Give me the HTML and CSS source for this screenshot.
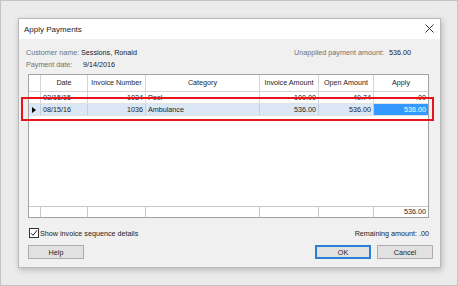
FILE: index.html
```html
<!DOCTYPE html>
<html lang="en">
<head>
    <meta charset="UTF-8">
    <title>Apply Payments</title>
    <link rel="stylesheet" href="styles.css">
</head>
<body>
    <div class="screen">
        <div class="dialog">
            <div class="title-bar">
                <span class="title">Apply Payments</span>
                <svg class="close" width="9" height="9" viewBox="0 0 9 9">
                    <path d="M0.5 0.5 L8.5 8.5 M8.5 0.5 L0.5 8.5" stroke="#333" stroke-width="1" fill="none"/>
                </svg>
            </div>

            <div class="info">
                <div class="info-row">
                    <span class="label">Customer name:</span>
                    <span class="value customer">Sessions, Ronald</span>
                    <span class="label unapplied">Unapplied payment amount:</span>
                    <span class="value amount">536.00</span>
                </div>
                <div class="info-row">
                    <span class="label">Payment date:</span>
                    <span class="value date">9/14/2016</span>
                </div>
            </div>

            <div class="grid">
                <div class="row head">
                    <div class="cell c-sel"></div>
                    <div class="cell c-date">Date</div>
                    <div class="cell c-num">Invoice Number</div>
                    <div class="cell c-cat">Category</div>
                    <div class="cell c-amt">Invoice Amount</div>
                    <div class="cell c-open">Open Amount</div>
                    <div class="cell c-apply">Apply</div>
                </div>
                <div class="row line">
                    <div class="cell c-sel"></div>
                    <div class="cell c-date">03/15/15</div>
                    <div class="cell c-num">1034</div>
                    <div class="cell c-cat">Pool</div>
                    <div class="cell c-amt">100.00</div>
                    <div class="cell c-open">40.74</div>
                    <div class="cell c-apply">.00</div>
                </div>
                <div class="row line selected">
                    <div class="cell c-sel"><span class="pointer"></span></div>
                    <div class="cell c-date">08/15/16</div>
                    <div class="cell c-num">1036</div>
                    <div class="cell c-cat">Ambulance</div>
                    <div class="cell c-amt">536.00</div>
                    <div class="cell c-open">536.00</div>
                    <div class="cell c-apply active">536.00</div>
                </div>
                <div class="grid-space"></div>
                <div class="row totals">
                    <div class="cell c-sel"></div>
                    <div class="cell c-date"></div>
                    <div class="cell c-num"></div>
                    <div class="cell c-cat"></div>
                    <div class="cell c-amt"></div>
                    <div class="cell c-open"></div>
                    <div class="cell c-apply">536.00</div>
                </div>
            </div>

            <div class="options">
                <label class="check">
                    <span class="box">
                        <svg width="8" height="8" viewBox="0 0 8 8">
                            <path d="M1 4.2 L3 6.3 L7 1.3" stroke="#222" stroke-width="1" fill="none"/>
                        </svg>
                    </span>
                    Show invoice sequence details
                </label>
                <span class="remaining">Remaining amount: .00</span>
            </div>

            <div class="buttons">
                <button class="btn">Help</button>
                <div class="btn-group">
                    <button class="btn default">OK</button>
                    <button class="btn">Cancel</button>
                </div>
            </div>

            <div class="highlight"></div>
        </div>
    </div>
</body>
</html>
```

FILE: styles.css
```css
body {
    margin: 0;
    font-family: 'Liberation Sans', Arial, sans-serif;
    font-size: 7.2px;
    color: #222222;
}

.screen {
    width: 458px;
    height: 286px;
    box-sizing: border-box;
    border: 1px solid #c4c4c4;
    background-color: #ebebeb;
    padding: 17px 0 0 17px;
}

.dialog {
    position: relative;
    width: 421px;
    height: 248px;
    background-color: #f0f0f0;
    border: 1px solid #b9b9b9;
    box-shadow: 1px 2px 6px rgba(0, 0, 0, 0.22);
    display: flex;
    flex-direction: column;
}

.title-bar {
    height: 20px;
    background-color: #ffffff;
    display: flex;
    align-items: center;
    justify-content: space-between;
    padding: 0 6px 0 5px;
}

.title {
    font-size: 8px;
    color: #1e1e1e;
}

.close {
    display: block;
    margin-top: -1px;
}

.info {
    padding: 8px 0 0 7px;
}

.info-row {
    display: flex;
    height: 12px;
    line-height: 12px;
}

.label {
    color: #707070;
    width: 55px;
}

.value {
    color: #1a1a1a;
}

.customer {
    width: 213px;
}

.date {
    margin-left: 2px;
}

.unapplied {
    width: auto;
    margin-right: 5px;
}

.grid {
    margin: 3px 0 0 9px;
    width: 399px;
    height: 142px;
    border: 1px solid #a3a3a3;
    background-color: #ffffff;
    display: flex;
    flex-direction: column;
}

.row {
    display: flex;
}

.cell {
    box-sizing: border-box;
    border-right: 1px solid #d4d4d4;
    padding: 0 2px;
    white-space: nowrap;
    overflow: hidden;
}

.cell:last-child {
    border-right: none;
}

.c-sel { width: 12px; padding: 0; }
.c-date { width: 47px; }
.c-num { width: 58px; text-align: right; }
.c-cat { width: 114px; }
.c-amt { width: 59px; text-align: right; }
.c-open { width: 55px; text-align: right; }
.c-apply { width: 54px; text-align: right; }

.head {
    height: 16px;
    line-height: 16px;
    border-bottom: 1px solid #d4d4d4;
}

.head .cell {
    text-align: center;
    color: #1e1e1e;
}

.line {
    height: 11px;
    line-height: 11px;
    border-bottom: 1px solid #e2e2e2;
}

.selected {
    background-color: #dbe7f5;
}

.selected .cell {
    border-right-color: #c3cfdd;
}

.active {
    background-color: #3399ff;
    color: #ffffff;
}

.pointer {
    display: block;
    width: 0;
    height: 0;
    margin: 3px 0 0 3px;
    border-top: 3px solid transparent;
    border-bottom: 3px solid transparent;
    border-left: 4px solid #000000;
}

.grid-space {
    flex: 1;
}

.totals {
    height: 10px;
    line-height: 10px;
    border-top: 1px solid #c8c8c8;
}

.totals .cell {
    border-right-color: #c8c8c8;
}

.options {
    display: flex;
    justify-content: space-between;
    align-items: center;
    height: 12px;
    margin: 9px 11px 0 10px;
}

.check {
    display: flex;
    align-items: center;
    gap: 1px;
}

.box {
    width: 8px;
    height: 8px;
    border: 1px solid #333333;
    background-color: #ffffff;
    display: flex;
    align-items: center;
    justify-content: center;
}

.box svg {
    display: block;
}

.buttons {
    display: flex;
    justify-content: space-between;
    margin: 6px 7px 0 9px;
}

.btn-group {
    display: flex;
    gap: 6px;
}

.btn {
    width: 56px;
    height: 14px;
    box-sizing: border-box;
    background-color: #e1e1e1;
    border: 1px solid #adadad;
    font-family: 'Liberation Sans', Arial, sans-serif;
    font-size: 7.2px;
    color: #1e1e1e;
    padding: 0;
}

.btn.default {
    border: 1px solid #2a7fd4;
    box-shadow: inset 0 0 0 1px #2a7fd4;
}

.highlight {
    position: absolute;
    left: 2px;
    top: 78px;
    width: 409px;
    height: 20px;
    border: 2px solid #e8141c;
}
```
